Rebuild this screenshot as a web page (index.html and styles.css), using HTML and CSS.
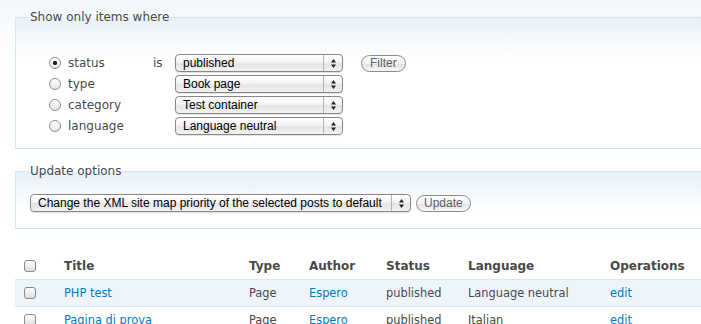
FILE: index.html
```html
<!DOCTYPE html>
<html lang="en">
<head>
    <meta charset="UTF-8">
    <title>Content</title>
    <link rel="stylesheet" href="styles.css">
</head>
<body>
    <div class="page">
        <fieldset class="box">
            <legend>Show only items where</legend>
            <div class="filter-grid">
                <label class="radio"><input type="radio" name="filter" checked> status</label>
                <span class="is">is</span>
                <span class="select"><select><option>published</option></select><span class="arrows"><svg width="7" height="12" viewBox="0 0 7 12"><path d="M3.5 2 L6 5.5 H1 Z M3.5 11 L6 7.5 H1 Z" fill="#222"/></svg></span></span>
                <button class="btn">Filter</button>

                <label class="radio"><input type="radio" name="filter"> type</label>
                <span></span>
                <span class="select"><select><option>Book page</option></select><span class="arrows"><svg width="7" height="12" viewBox="0 0 7 12"><path d="M3.5 2 L6 5.5 H1 Z M3.5 11 L6 7.5 H1 Z" fill="#222"/></svg></span></span>
                <span></span>

                <label class="radio"><input type="radio" name="filter"> category</label>
                <span></span>
                <span class="select"><select><option>Test container</option></select><span class="arrows"><svg width="7" height="12" viewBox="0 0 7 12"><path d="M3.5 2 L6 5.5 H1 Z M3.5 11 L6 7.5 H1 Z" fill="#222"/></svg></span></span>
                <span></span>

                <label class="radio"><input type="radio" name="filter"> language</label>
                <span></span>
                <span class="select"><select><option>Language neutral</option></select><span class="arrows"><svg width="7" height="12" viewBox="0 0 7 12"><path d="M3.5 2 L6 5.5 H1 Z M3.5 11 L6 7.5 H1 Z" fill="#222"/></svg></span></span>
                <span></span>
            </div>
        </fieldset>

        <fieldset class="box update">
            <legend>Update options</legend>
            <div class="update-row">
                <span class="select wide"><select><option>Change the XML site map priority of the selected posts to default</option></select><span class="arrows"><svg width="7" height="12" viewBox="0 0 7 12"><path d="M3.5 2 L6 5.5 H1 Z M3.5 11 L6 7.5 H1 Z" fill="#222"/></svg></span></span>
                <button class="btn">Update</button>
            </div>
        </fieldset>

        <table class="posts">
            <colgroup>
                <col style="width: 49px">
                <col style="width: 185px">
                <col style="width: 60px">
                <col style="width: 77px">
                <col style="width: 82px">
                <col style="width: 142px">
                <col>
            </colgroup>
            <thead>
                <tr>
                    <th class="check"><input type="checkbox"></th>
                    <th>Title</th>
                    <th>Type</th>
                    <th>Author</th>
                    <th>Status</th>
                    <th>Language</th>
                    <th>Operations</th>
                </tr>
            </thead>
            <tbody>
                <tr class="odd">
                    <td class="check"><input type="checkbox"></td>
                    <td><a href="#">PHP test</a></td>
                    <td>Page</td>
                    <td><a href="#">Espero</a></td>
                    <td>published</td>
                    <td>Language neutral</td>
                    <td><a href="#">edit</a></td>
                </tr>
                <tr>
                    <td class="check"><input type="checkbox"></td>
                    <td><a href="#">Pagina di prova</a></td>
                    <td>Page</td>
                    <td><a href="#">Espero</a></td>
                    <td>published</td>
                    <td>Italian</td>
                    <td><a href="#">edit</a></td>
                </tr>
            </tbody>
        </table>
    </div>
</body>
</html>
```

FILE: styles.css
```css
html {
    overflow: hidden;
}
body {
    margin: 0;
    font-family: "DejaVu Sans", Verdana, sans-serif;
    font-size: 12px;
    color: #494949;
    background: #fff linear-gradient(#f2f6fa, #fff 60px) no-repeat;
}
.page {
    width: 760px;
    padding: 10px 0 0 15px;
}
.box {
    margin: 0;
    border: 1px solid #d5e6f2;
    padding: 30px 0 13px 13px;
    background: linear-gradient(#e8f0f7 0, #fff 40px);
}
.box legend {
    padding: 0 1px;
    line-height: 14px;
    color: #494949;
}
.update {
    margin-top: 15px;
    padding: 16px 0 16px 13px;
}
.filter-grid {
    margin-left: 20px;
    display: grid;
    grid-template-columns: 104px 22px 168px auto;
    grid-auto-rows: 18px;
    row-gap: 3px;
    column-gap: 0;
    align-items: center;
}
.filter-grid .btn {
    margin-left: 18px;
    justify-self: start;
}
.radio {
    display: flex;
    align-items: center;
    gap: 7px;
}
.radio input {
    appearance: none;
    margin: 0;
    width: 12px;
    height: 12px;
    border: 1px solid #8e8e8e;
    border-radius: 50%;
    background: linear-gradient(#fff, #e6e6e6);
    box-sizing: border-box;
}
.radio input:checked {
    background: radial-gradient(circle, #222 0 1.8px, transparent 2.4px), linear-gradient(#fff, #e6e6e6);
}
.select {
    position: relative;
    display: inline-block;
    width: 168px;
    height: 18px;
    box-sizing: border-box;
    border: 1px solid #878787;
    border-radius: 4px;
    background: linear-gradient(#fff, #f4f4f4 45%, #e4e4e4 55%, #f2f2f2);
    box-shadow: 0 1px 1px rgba(0,0,0,0.12);
}
.select select {
    appearance: none;
    border: none;
    background: transparent;
    width: 100%;
    height: 16px;
    padding: 0 0 0 7px;
    margin: 0;
    font-family: "Liberation Sans", Arial, sans-serif;
    font-size: 12px;
    color: #000;
    outline: none;
}
.select .arrows {
    position: absolute;
    top: 0;
    right: 0;
    width: 18px;
    height: 16px;
    border-left: 1px solid #b4b4b4;
    display: flex;
    align-items: center;
    justify-content: center;
}
.wide {
    width: 381px;
    margin-left: 1px;
}
.update-row {
    display: flex;
    align-items: center;
    gap: 5px;
}
.btn {
    height: 17px;
    padding: 0 8px;
    border: 1px solid #8a8a8a;
    border-radius: 9px;
    background: linear-gradient(#fff, #f3f3f3 50%, #e3e3e3 55%, #f7f7f7);
    font-family: "Liberation Sans", Arial, sans-serif;
    font-size: 12px;
    color: #606060;
    line-height: 15px;
}
.update-row .btn {
    padding: 0 7px;
}
.posts {
    margin-top: 24px;
    width: 700px;
    table-layout: fixed;
    border-collapse: collapse;
}
.posts th {
    text-align: left;
    font-weight: bold;
    color: #494949;
    height: 26px;
    padding: 0;
    border-bottom: 1px solid #d3e7f4;
}
.posts td {
    height: 26px;
    padding: 0;
    font-size: 11.4px;
    border-bottom: 1px solid #d3e7f4;
}
.posts .check {
    padding-left: 9px;
}
.posts tr.odd td {
    background: #edf5fa;
}
.posts input[type=checkbox] {
    appearance: none;
    margin: 0;
    display: block;
    width: 12px;
    height: 12px;
    border: 1px solid #8a8a8a;
    border-radius: 3px;
    background: linear-gradient(#fff, #dedede);
    box-sizing: border-box;
}
.posts a {
    color: #027ac6;
    text-decoration: none;
}
```
